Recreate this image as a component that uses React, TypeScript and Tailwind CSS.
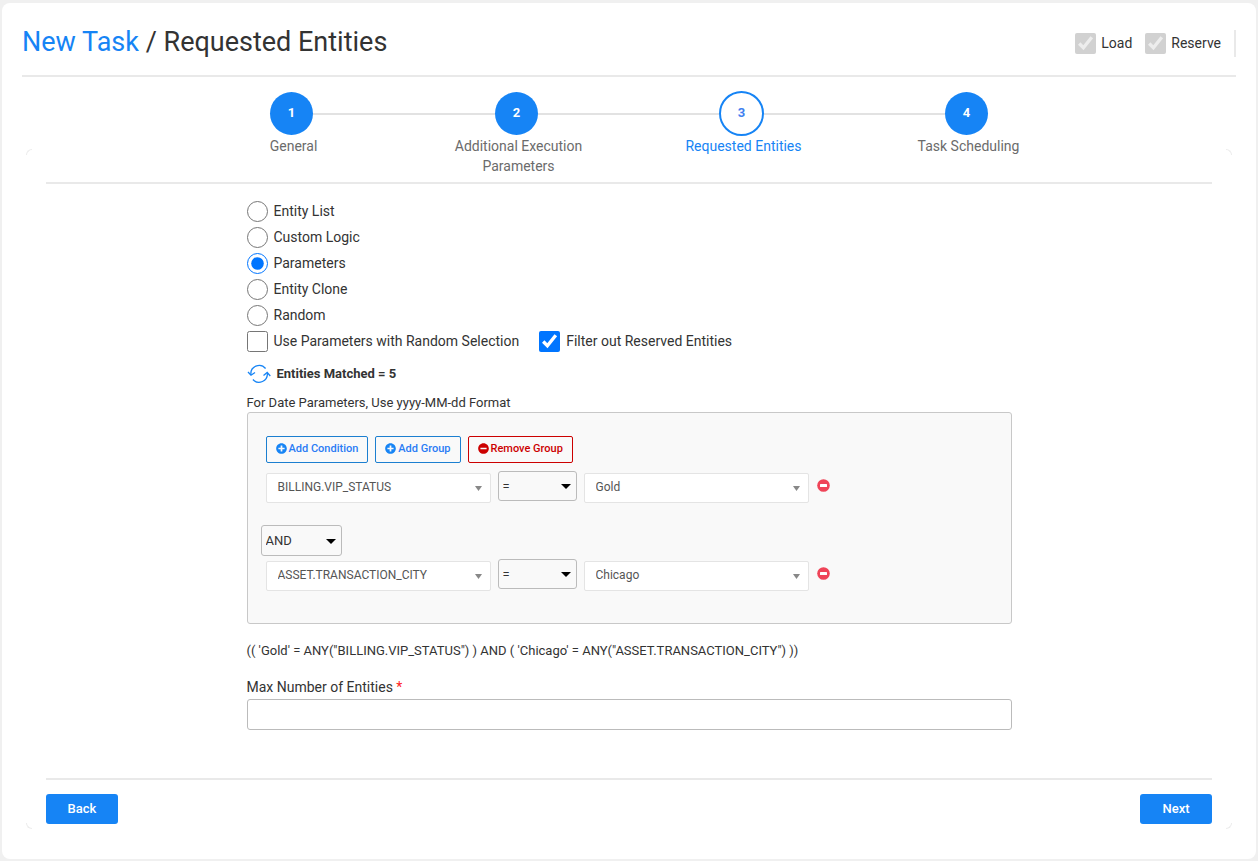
import { useState, type ReactNode } from "react";
import { FaMinusCircle, FaPlusCircle } from "react-icons/fa";

const steps = ["General", "Additional Execution Parameters", "Requested Entities", "Task Scheduling"];
const activeStep = 2;
const modes = ["Entity List", "Custom Logic", "Parameters", "Entity Clone", "Random"];

function Stepper() {
  return (
    <ol className="mx-auto grid w-full max-w-[900px] grid-cols-4">
      {steps.map((label, i) => {
        const active = i === activeStep;
        return (
          <li key={label} className="flex flex-col items-center">
            <div className="flex h-[45px] w-full items-center">
              <span className={i === 0 ? "h-0.5 flex-1" : "h-0.5 flex-1 bg-[#e2e2e2]"} />
              <span
                className={
                  active
                    ? "flex size-[45px] items-center justify-center rounded-full border-2 border-[#1684f5] bg-white pb-px text-[13px] font-bold text-[#3f7ff0]"
                    : "flex size-[43px] items-center justify-center rounded-full bg-[#1684f5] pb-px text-[13px] font-bold text-white"
                }
              >
                {i + 1}
              </span>
              <span className={i === steps.length - 1 ? "h-0.5 flex-1" : "h-0.5 flex-1 bg-[#e2e2e2]"} />
            </div>
            <span
              className={
                active
                  ? "ml-1 max-w-[150px] text-center text-[14px] leading-5 text-[#1684f5]"
                  : "ml-1 max-w-[150px] text-center text-[14px] leading-5 text-[#6b6b6b]"
              }
            >
              {label}
            </span>
          </li>
        );
      })}
    </ol>
  );
}

function PickList({ label, value }: { label: string; value: string }) {
  return (
    <div className="grid w-[225px] items-center">
      <select
        aria-label={label}
        className="col-start-1 row-start-1 h-[30px] w-full appearance-none rounded-[2px] border border-[#e4e4e4] bg-white pb-0.5 pl-[11px] text-[12px] text-[#555]"
      >
        <option>{value}</option>
      </select>
      <svg className="pointer-events-none col-start-1 row-start-1 mt-px mr-[9px] h-[5px] w-[7px] justify-self-end" viewBox="0 0 7 5">
        <path d="M0 0h7L3.500 5z" fill="#888" />
      </svg>
    </div>
  );
}

function BoxSelect({ label, value, options, wide }: { label: string; value: string; options: string[]; wide?: boolean }) {
  return (
    <div className={wide ? "grid h-[31px] w-[81px] items-center" : "grid h-[30px] w-[79px] items-center"}>
      <select
        aria-label={label}
        defaultValue={value}
        className="col-start-1 row-start-1 h-full w-full appearance-none rounded-[3px] border border-[#bbb] bg-[#f9f9f9] pt-px pl-1 text-[13px] text-[#333]"
      >
        {options.map((o) => (
          <option key={o}>{o}</option>
        ))}
      </select>
      <svg className="pointer-events-none col-start-1 row-start-1 mt-px mr-[6px] h-[5px] w-[10px] justify-self-end" viewBox="0 0 10 5">
        <path d="M0 0h10L5 5z" fill="#000" />
      </svg>
    </div>
  );
}

function Condition({ field, value }: { field: string; value: string }) {
  return (
    <div className="flex items-start gap-[7px]">
      <div className="pt-0.5">
        <PickList label="Parameter" value={field} />
      </div>
      <BoxSelect label={`Operator for ${field}`} value="=" options={["=", "<>", "<", ">"]} />
      <div className="pt-0.5">
        <PickList label={`Value for ${field}`} value={value} />
      </div>
      <button type="button" aria-label={`Remove ${field}`} className="mt-2 ml-px">
        <svg className="size-[13px]" viewBox="0 0 13 13">
          <circle cx="6.500" cy="6.500" r="6.300" fill="#ef4458" />
          <rect x="3" y="5" width="7" height="3" rx="0.500" fill="#fff" />
        </svg>
      </button>
    </div>
  );
}

function OutlineButton({ danger, children }: { danger?: boolean; children: ReactNode }) {
  return (
    <button
      type="button"
      className={
        danger
          ? "flex h-[27px] items-center gap-0.5 rounded-[2px] border border-[#c00] px-[9px] pb-px text-[11px] font-medium text-[#c00]"
          : "flex h-[27px] items-center gap-0.5 rounded-[2px] border border-[#1b7fd0] px-[9px] pb-px text-[11px] font-medium text-[#2a7cf5]"
      }
    >
      {danger ? <FaMinusCircle className="mb-px size-[11px]" /> : <FaPlusCircle className="mb-px size-[11px] text-[#1684f5]" />}
      {children}
    </button>
  );
}

export default function App() {
  const [mode, setMode] = useState("Parameters");
  return (
    <div className="min-h-screen bg-[#f0f0f0] px-0.5 pt-[3px] pb-0.5 font-[Roboto,sans-serif] text-[#333]">
      <main className="rounded-lg bg-white px-5 pb-[35px]">
        <header className="flex h-[74px] items-center justify-between border-b-2 border-[#e9e9e9]">
          <h1 className="pt-[6px] text-[27px] leading-8">
            <a href="#new-task" className="text-[#1684f5]">New Task</a> / Requested Entities
          </h1>
          <div className="mt-2 flex h-[27px] items-center gap-[13px] border-r-2 border-[#e9e9e9] pr-[13px] text-[14px]">
            <label className="flex items-center gap-[5px]">
              <input type="checkbox" defaultChecked disabled className="size-[21px]" />
              Load
            </label>
            <label className="flex items-center gap-[5px]">
              <input type="checkbox" defaultChecked disabled className="size-[21px]" />
              Reserve
            </label>
          </div>
        </header>

        <section className="relative px-6 pt-[14px]">
          <span className="absolute top-[72px] left-1 size-[6px] rounded-tl-md border-t border-l border-[#ececec]" />
          <span className="absolute top-[72px] right-1 size-[6px] rounded-tr-md border-t border-r border-[#ececec]" />
          <span className="absolute bottom-[-5px] left-1 size-[6px] rounded-bl-md border-b border-l border-[#ececec]" />
          <span className="absolute right-1 bottom-[-5px] size-[6px] rounded-br-md border-r border-b border-[#ececec]" />

          <div className="min-h-[93px] border-b-2 border-[#e9e9e9]">
            <Stepper />
          </div>

          <form className="mx-auto max-w-[765px] pt-[14px] pb-12 text-[14px]">
            <fieldset>
              {modes.map((m) => (
                <label key={m} className="flex h-[26px] items-center gap-[6px]">
                  <input
                    type="radio"
                    name="mode"
                    checked={mode === m}
                    onChange={() => setMode(m)}
                    className="size-[21px]"
                  />
                  {m}
                </label>
              ))}
            </fieldset>

            <div className="mt-[3px] flex items-center gap-5">
              <label className="flex items-center gap-[6px]">
                <input type="checkbox" className="size-[21px]" />
                Use Parameters with Random Selection
              </label>
              <label className="flex items-center gap-[6px]">
                <input type="checkbox" defaultChecked className="size-[21px]" />
                Filter out Reserved Entities
              </label>
            </div>

            <div className="mt-[11px] flex h-[21px] items-center gap-[6px] text-[13px] font-bold">
              <button type="button" aria-label="Refresh">
                <svg className="h-5 w-6" viewBox="0 0 24 20" fill="none" stroke="#1684f5" strokeWidth="1.300">
                  <path d="M4 11A8.300 8.300 0 0 1 18.600 4.500" />
                  <path d="M1 8l3 3.200L8 8.500" />
                  <path d="M20.300 9A8.300 8.300 0 0 1 5.900 15.500" />
                  <path d="M16.500 11.500l3.700-3L23.300 12" />
                </svg>
              </button>
              Entities Matched = 5
            </div>

            <p className="mt-[10px] text-[13px] leading-[18px]">For Date Parameters, Use yyyy-MM-dd Format</p>
            <div className="rounded-[3px] border border-[#c8c8c8] bg-[#f9f9f9] px-[18px] pt-[23px] pb-8">
              <div className="mb-2 flex gap-[7px]">
                <OutlineButton>Add Condition</OutlineButton>
                <OutlineButton>Add Group</OutlineButton>
                <OutlineButton danger>Remove Group</OutlineButton>
              </div>
              <Condition field="BILLING.VIP_STATUS" value="Gold" />
              <div className="mt-[22px] mb-[3px] -ml-[5px]">
                <BoxSelect label="Group operator" value="AND" options={["AND", "OR"]} wide />
              </div>
              <Condition field="ASSET.TRANSACTION_CITY" value="Chicago" />
            </div>

            <p className="mt-[18px] text-[13px] leading-[18px]">
              {`(( 'Gold' = ANY("BILLING.VIP_STATUS") ) AND ( 'Chicago' = ANY("ASSET.TRANSACTION_CITY") ))`}
            </p>

            <label htmlFor="max-entities" className="mt-[17px] block leading-5">
              Max Number of Entities <span className="text-[#f22]">*</span>
            </label>
            <input
              id="max-entities"
              type="text"
              className="mt-0.5 block h-[31px] w-full rounded-[3px] border border-[#bbb] bg-white px-2"
            />
          </form>

          <footer className="flex justify-between border-t-2 border-[#e9e9e9] pt-[14px] text-[13px] font-medium text-white">
            <button type="button" className="h-[30px] w-[72px] rounded-[3px] bg-[#1684f5]">Back</button>
            <button type="button" className="h-[30px] w-[72px] rounded-[3px] bg-[#1684f5]">Next</button>
          </footer>
        </section>
      </main>
    </div>
  );
}
